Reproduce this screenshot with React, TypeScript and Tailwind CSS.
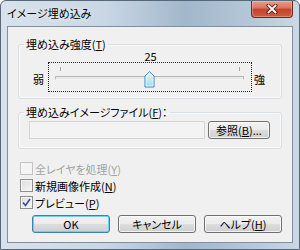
import React from "react";

const FONT = "font-['Noto_Sans_CJK_JP','Noto_Sans',sans-serif] [font-feature-settings:'palt']";

function U({ children }: { children: React.ReactNode }) {
  return <span className="underline underline-offset-[1px] decoration-[1px]">{children}</span>;
}

function Btn({ children, def = false, w = "w-[78px]" }: { children: React.ReactNode; def?: boolean; w?: string }) {
  return (
    <div
      className={`${w} h-[18px] rounded-[3px] border flex items-center justify-center text-[11px] leading-[14px] text-black bg-[linear-gradient(#f2f2f2_0%,#ebebeb_50%,#dddddd_51%,#cfcfcf_100%)] ${
        def
          ? "border-[#3c7fb1] shadow-[inset_0_0_0_1px_#6fd0f4]"
          : "border-[#707070] shadow-[inset_0_0_0_1px_rgba(255,255,255,0.7)]"
      }`}
    >
      {children}
    </div>
  );
}

function Check({ checked = false, disabled = false, children }: { checked?: boolean; disabled?: boolean; children: React.ReactNode }) {
  return (
    <div className="h-[17px] flex items-center">
      <div
        className={`w-[13px] h-[13px] border flex items-center justify-center ${
          disabled
            ? "border-[#c4c4c4] bg-[#f4f4f4]"
            : "border-[#8e8f8f] bg-[linear-gradient(135deg,#dcdcdc_0%,#f6f6f6_100%)] shadow-[inset_0_0_0_1px_#f4f4f4]"
        }`}
      >
        {checked && (
          <svg width="9" height="9" viewBox="0 0 9 9">
            <path d="M1 4.5 L3.5 7.5 L8 1" fill="none" stroke="#3a4f8f" strokeWidth="1.6" />
          </svg>
        )}
      </div>
      <span className={`ml-[2px] text-[11px] leading-[14px] ${disabled ? "text-[#a3a3a3]" : "text-black"}`}>{children}</span>
    </div>
  );
}

export default function App() {
  return (
    <div className={`w-[300px] h-[250px] bg-white ${FONT}`}>
      <div className="w-full h-full rounded-t-[6px] border border-[#56687a] flex flex-col bg-[linear-gradient(90deg,#d8e2ec_0%,#c9d7e4_35%,#a2b7cb_62%,#b6c8d9_85%,#cbd8e4_100%)]">
        {/* title bar */}
        <div className="h-[25px] flex items-start justify-between pl-[6px] pr-[6px]">
          <div className="mt-[5px] text-[11px] leading-[14px] text-black [text-shadow:0_0_6px_rgba(255,255,255,0.9)]">
            イメージ埋め込み
          </div>
          <div className="w-[42px] h-[17px] rounded-b-[4px] border border-t-0 border-[#6b2a1e] bg-[linear-gradient(#e4a08d_0%,#d6735d_45%,#c2432c_50%,#cf5b3e_100%)] shadow-[inset_0_0_0_1px_rgba(255,220,210,0.35)] flex items-center justify-center">
            <svg width="12" height="10" viewBox="0 0 12 10">
              <path d="M2.5 1.5 L9.5 8.5 M9.5 1.5 L2.5 8.5" stroke="#5a1e14" strokeWidth="3.6" strokeLinecap="square" />
              <path d="M2.5 1.5 L9.5 8.5 M9.5 1.5 L2.5 8.5" stroke="#ffffff" strokeWidth="1.8" strokeLinecap="square" />
            </svg>
          </div>
        </div>
        {/* client */}
        <div className="mx-[6px] mb-[6px] flex-1 border border-[#7f90a3] bg-[#f0f0f0] flex flex-col text-black">
          {/* group 1 */}
          <fieldset className="ml-[10px] w-[264px] mt-[10px] border border-[#d5dfe5] rounded-[3px] pb-[6px] shadow-[inset_0_0_0_1px_rgba(255,255,255,0.6)]">
            <legend className="ml-[5px] px-[2px] text-[11px] leading-[14px]">
              埋め込み強度(<U>T</U>)
            </legend>
            <div className="text-[11px] leading-[11px] text-center pl-[1px]">25</div>
            <div className="flex items-start">
              <span className="ml-[14px] mt-[10px] text-[11px] leading-[14px]">弱</span>
              <div className="ml-[4px] relative w-[204px] h-[30px] border border-dotted border-[#222]">
                <div className="absolute left-[11px] top-[4px] w-px h-[4px] bg-[#a8a8a8]" />
                <div className="absolute left-[190px] top-[4px] w-px h-[4px] bg-[#a8a8a8]" />
                <div className="absolute left-[6px] top-[13px] w-[189px] h-[4px] rounded-[1px] border border-[#b6b6b6] bg-[#e7eaea] border-b-[#f4f4f4]" />
                <svg className="absolute left-[95px] top-[8px]" width="11" height="17" viewBox="0 0 11 17">
                  <defs>
                    <linearGradient id="tg" x1="0" y1="0" x2="0" y2="1">
                      <stop offset="0" stopColor="#e6f6fe" />
                      <stop offset="1" stopColor="#9fdcf8" />
                    </linearGradient>
                  </defs>
                  <path d="M1 16 V5 L5.5 0.8 L10 5 V16 Z" fill="url(#tg)" stroke="#2f86c4" strokeWidth="1" />
                  <path d="M2 15 V5.4 L5.5 2.2 L9 5.4 V15 Z" fill="none" stroke="#ffffff" strokeOpacity="0.6" strokeWidth="1" />
                </svg>
              </div>
              <span className="ml-[2px] mt-[10px] text-[11px] leading-[14px]">強</span>
            </div>
          </fieldset>
          {/* group 2 */}
          <fieldset className="ml-[10px] w-[264px] mt-[6px] border border-[#d5dfe5] rounded-[3px] pb-[9px] shadow-[inset_0_0_0_1px_rgba(255,255,255,0.6)]">
            <legend className="ml-[5px] px-[2px] text-[11px] leading-[14px]">
              埋め込みイメージファイル(<U>F</U>)：
            </legend>
            <div className="flex items-center mt-[2px] pl-[10px]">
              <div className="w-[176px] h-[18px] border border-[#d5d5d5] bg-[#f3f3f3]" />
              <div className="ml-[3px]">
                <Btn w="w-[62px]">
                  参照(<U>B</U>)...
                </Btn>
              </div>
            </div>
          </fieldset>
          {/* checkboxes */}
          <div className="mt-[11px] pl-[12px] flex flex-col">
            <Check disabled>
              全レイヤを処理(<U>Y</U>)
            </Check>
            <Check>
              新規画像作成(<U>N</U>)
            </Check>
            <Check checked>
              プレビュー(<U>P</U>)
            </Check>
          </div>
          {/* buttons */}
          <div className="mt-[4px] pl-[24px] flex gap-[8px]">
            <Btn def>OK</Btn>
            <Btn>キャンセル</Btn>
            <Btn>
              ヘルプ(<U>H</U>)
            </Btn>
          </div>
        </div>
      </div>
    </div>
  );
}
